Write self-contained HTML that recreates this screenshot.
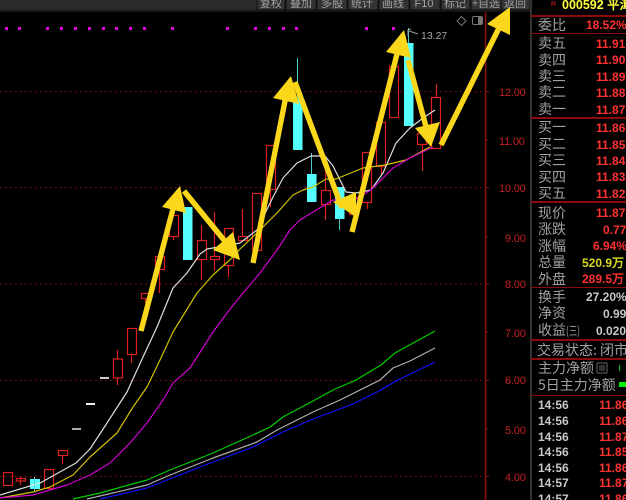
<!DOCTYPE html>
<html><head><meta charset="utf-8"><style>
html,body{margin:0;padding:0;background:#000;width:626px;height:500px;overflow:hidden}
svg{display:block}
.z{font-family:"WenQuanYi Zen Hei","Noto Sans CJK SC",sans-serif;font-size:14px;fill:#a0a0a0}
.n{font-family:"Liberation Sans","WenQuanYi Zen Hei",sans-serif;font-size:12px;font-weight:bold}
.r{fill:#ff3232}.w{fill:#c8c8c8}.y{fill:#d8d820}
.a{font-family:"Liberation Sans",sans-serif;font-size:11px;fill:#c42222;letter-spacing:-.2px}
.b{font-family:"WenQuanYi Zen Hei","Noto Sans CJK SC",sans-serif;font-size:11px;fill:#a0a0a0;text-anchor:middle}
</style></head><body>
<svg width="626" height="500" viewBox="0 0 626 500" xmlns="http://www.w3.org/2000/svg">
<rect width="626" height="500" fill="#000"/>
<!-- toolbar -->
<rect width="531" height="10" fill="#2a2a2a"/><rect y="10" width="531" height="2" fill="#161616"/>
<g fill="#333" stroke="#111"><rect x="257" y="-2" width="28" height="12"/><rect x="286" y="-2" width="30" height="12"/><rect x="317" y="-2" width="30" height="12"/><rect x="348" y="-2" width="30" height="12"/><rect x="379" y="-2" width="30" height="12"/><rect x="410" y="-2" width="30" height="12"/><rect x="441" y="-2" width="29" height="12"/><rect x="471" y="-2" width="30" height="12"/><rect x="501" y="-2" width="29" height="12"/></g>
<g class="b"><text x="271" y="7">复权</text><text x="301" y="7">叠加</text><text x="332" y="7">多股</text><text x="362" y="7">统计</text><text x="393" y="7">画线</text><text x="424" y="7" style="font-family:'Liberation Sans'">F10</text><text x="455" y="7">标记</text><text x="486" y="7">+自选</text><text x="515" y="7">返回</text></g>
<!-- magenta dots -->
<g fill="#e000e0"><rect x="5" y="27" width="3" height="3"/><rect x="18" y="27" width="3" height="3"/><rect x="46" y="27" width="3" height="3"/><rect x="60" y="27" width="3" height="3"/><rect x="74" y="27" width="3" height="3"/><rect x="88" y="27" width="3" height="3"/><rect x="102" y="27" width="3" height="3"/><rect x="115" y="27" width="3" height="3"/><rect x="129" y="27" width="3" height="3"/><rect x="143" y="27" width="3" height="3"/><rect x="171" y="27" width="3" height="3"/><rect x="226" y="27" width="3" height="3"/><rect x="254" y="27" width="3" height="3"/><rect x="268" y="27" width="3" height="3"/><rect x="282" y="27" width="3" height="3"/><rect x="295" y="27" width="3" height="3"/><rect x="365" y="27" width="3" height="3"/><rect x="392" y="27" width="3" height="3"/></g>
<!-- grid -->
<g stroke="#8a1010" stroke-width="1" stroke-dasharray="1.5 3.5"><path d="M0 91.5H485M0 187.5H485M0 284H485M0 380.5H485M0 476.5H485"/></g>
<!-- axis -->
<path d="M485.500 12V500" stroke="#8c1010" stroke-width="1.500"/>
<path d="M485 91.500h4M485 140h3M485 187.500h4M485 237h3M485 284h4M485 332h3M485 380.500h4M485 429h3M485 476.500h4" stroke="#8c1010"/>
<g class="a"><text x="499" y="96">12.00</text><text x="499" y="145">11.00</text><text x="499" y="192">10.00</text><text x="505" y="242">9.00</text><text x="505" y="288">8.00</text><text x="505" y="337">7.00</text><text x="505" y="384">6.00</text><text x="505" y="434">5.00</text><text x="505" y="481">4.00</text></g>
<!-- candles red -->
<g stroke="#dc2020" fill="none" stroke-width="1.200">
<rect x="3.500" y="472.500" width="9" height="13"/>
<path d="M20.500 476V485"/><rect x="16.500" y="478.500" width="9" height="2.500"/>
<rect x="44.500" y="469.500" width="9" height="19"/>
<rect x="58.500" y="450.500" width="9" height="5"/><path d="M62.500 455V464"/>
<rect x="113.500" y="359" width="9" height="19"/><path d="M117.500 350V359M117.500 378V385"/>
<rect x="127.500" y="328.500" width="9" height="26"/><path d="M131.500 354V363"/>
<rect x="141.500" y="293.500" width="9" height="5"/><path d="M145.500 298V303"/>
<rect x="155.500" y="256.500" width="9" height="13"/><path d="M159.500 269V293"/>
<rect x="169.500" y="215.500" width="9" height="21"/><path d="M173.500 236V240"/>
<rect x="197.500" y="240.500" width="9" height="19"/><path d="M201.500 225V240M201.500 259V280"/>
<rect x="210.500" y="256.500" width="9" height="3"/><path d="M214.500 212V256M214.500 259V271"/>
<rect x="224.500" y="228.500" width="9" height="37"/><path d="M228.500 265V277"/>
<rect x="238.500" y="236.500" width="9" height="4"/><path d="M242.500 209V236"/>
<rect x="252.500" y="193.500" width="9" height="57"/>
<rect x="266.500" y="145.500" width="9" height="44"/><path d="M270.500 189V207"/>
<rect x="321.500" y="190.500" width="9" height="14"/><path d="M325.500 168V190M325.500 204V220"/>
<rect x="349.500" y="197.500" width="9" height="17"/>
<rect x="362.500" y="152.500" width="9" height="50"/><path d="M367.500 202V209"/>
<rect x="376.500" y="122.500" width="9" height="44"/><path d="M381.500 166V175"/>
<rect x="389.500" y="66.500" width="9" height="51"/>
<rect x="417.500" y="133.500" width="9" height="11"/><path d="M422.500 144V171"/>
<rect x="431.500" y="97.500" width="9" height="51"/><path d="M436.500 84V97"/>
</g>
<!-- dashes -->
<rect x="72" y="428" width="9" height="2" fill="#aaa"/><rect x="86" y="403" width="9" height="2" fill="#eee"/><rect x="100" y="377" width="9" height="2" fill="#ccc"/>
<!-- candles cyan -->
<g fill="#55ffff">
<rect x="30" y="479" width="10" height="10"/><rect x="183" y="207" width="9.500" height="53"/><rect x="293" y="98" width="9.500" height="52"/><rect x="307" y="174" width="9.500" height="28"/><rect x="335" y="187" width="9.500" height="32"/><rect x="404" y="43" width="9.500" height="83"/>
</g>
<path d="M34.500 477V491M297.500 58V100M311.500 153V174M339.500 218V230M408.500 28V43" stroke="#44cccc" fill="none"/>
<!-- MA lines -->
<g fill="none" stroke-width="1.200" stroke-linejoin="round">
<path stroke="#e0e0e0" d="M0 495L40 483L76 463L90 449L107 423L127 392L143 357L157 327L173 288L187 273L200 254L207 249L225 246L240 243L257 230L273 197L283 178L297 163L311 156L325 156L333 166L346 192L356 193L371 190L383 173L396 143L410 128L423 118L435 110"/>
<path stroke="#d0c000" d="M0 498L33 492L50 487L73 475L90 457L117 433L133 407L147 387L160 360L173 332L197 293L213 275L233 257L240 249L260 230L277 213L293 195L303 190L313 187L326 179L336 179L363 168L385 165L406 160L430 147"/>
<path stroke="#d000d0" d="M0 498L33 495L67 485L90 475L110 463L130 443L147 423L163 400L173 383L190 368L213 332L227 313L243 293L260 273L277 250L290 230L300 220L313 212L333 200L356 199L371 190L393 168L410 158L433 147"/>
<path stroke="#00d000" d="M73 499L100 493L147 480L170 470L213 453L253 435L270 427L283 417L313 401L333 390L356 380L381 365L395 353L435 331"/>
<path stroke="#b0b0b0" d="M87 499L147 485L170 475L213 458L257 442L277 430L313 412L340 400L380 380L393 368L410 361L435 348"/>
<path stroke="#1010ff" d="M100 499L147 488L200 467L253 447L283 432L313 419L353 404L381 390L396 381L435 362"/>
</g>
<!-- top marker -->
<path d="M408 36V30L411 29M409 31L418 34" stroke="#999" fill="none"/>
<text x="421" y="39" font-family="Liberation Sans,sans-serif" font-size="10.500" fill="#a8a8a8">13.27</text>
<path d="M461.500 16.500L466 21L461.500 25.500L457 21Z" fill="none" stroke="#777"/>
<rect x="472.500" y="16.500" width="10" height="8" rx="1.500" fill="none" stroke="#777"/><rect x="478" y="17" width="4" height="7" fill="#777"/>
<!-- arrows -->
<g stroke="#fbd71b" stroke-width="5.400" fill="none">
<path d="M141 331L174 205M184 191L228 245M253 263L286 96M295 82L342 208M352 232L398 50M408 60L428 134M441 145L499 28"/>
</g>
<g fill="#fbd71b">
<path d="M180 186L162 207L186 213Z"/>
<path d="M233 232L213 250L240 260Z"/>
<path d="M291 76L273 98L299 104Z"/>
<path d="M333 202L356 217L356 192Z"/>
<path d="M404 30L386 52L411 58Z"/>
<path d="M415 128L440 122L431 147Z"/>
<path d="M510 7L487 24L510 35Z"/>
</g>
<!-- panel -->
<rect x="530" y="0" width="2" height="500" fill="#333"/>
<g fill="#8c0a0a"><rect x="531" y="15" width="95" height="2"/><rect x="531" y="33" width="95" height="1"/><rect x="531" y="117" width="95" height="2"/><rect x="531" y="201" width="95" height="2"/><rect x="531" y="287" width="95" height="1"/><rect x="531" y="339" width="95" height="2"/><rect x="531" y="358" width="95" height="2"/><rect x="531" y="395" width="95" height="1"/></g>
<text x="551" y="6" font-family="Liberation Sans,sans-serif" font-size="7" fill="#e02020">R</text>
<text x="562" y="9" font-family="Liberation Sans,'WenQuanYi Zen Hei',sans-serif" font-size="12.500" font-weight="bold" fill="#ffff40">000592 平潭</text>
<g class="z">
<text x="538" y="30">委比</text>
<text x="538" y="48">卖五</text><text x="538" y="65">卖四</text><text x="538" y="81">卖三</text><text x="538" y="97">卖二</text><text x="538" y="114">卖一</text>
<text x="538" y="132">买一</text><text x="538" y="149">买二</text><text x="538" y="165">买三</text><text x="538" y="182">买四</text><text x="538" y="198">买五</text>
<text x="538" y="218">现价</text><text x="538" y="234">涨跌</text><text x="538" y="251">涨幅</text><text x="538" y="267">总量</text><text x="538" y="284">外盘</text>
<text x="538" y="302">换手</text><text x="538" y="318">净资</text><text x="538" y="335">收益</text><text x="566" y="335" font-size="12" textLength="14" lengthAdjust="spacingAndGlyphs">(三)</text>
<text x="537" y="355">交易状态: 闭市</text>
<text x="538" y="373">主力净额</text><text x="538" y="390">5日主力净额</text>
</g>
<rect x="597" y="363" width="10" height="10" rx="1" fill="none" stroke="#666"/><path d="M599 366h6M599 368h6M599 370h6" stroke="#666"/>
<rect x="619" y="365" width="1" height="6" fill="#00d000"/><rect x="619" y="382" width="7" height="5" fill="#00ee00"/>
<g class="n r">
<text x="586" y="29">18.52%</text>
<text x="596" y="48">11.91</text><text x="596" y="64">11.90</text><text x="596" y="81">11.89</text><text x="596" y="97">11.88</text><text x="596" y="114">11.87</text>
<text x="596" y="132">11.86</text><text x="596" y="149">11.85</text><text x="596" y="165">11.84</text><text x="596" y="181">11.83</text><text x="596" y="198">11.82</text>
<text x="596" y="217">11.87</text><text x="603" y="234">0.77</text><text x="593" y="250">6.94%</text>
<text x="582" y="283">289.5万</text>
<text x="599" y="409">11.86</text><text x="599" y="425">11.86</text><text x="599" y="441">11.87</text><text x="599" y="456">11.85</text><text x="599" y="472">11.86</text><text x="599" y="487">11.87</text><text x="599" y="503">11.86</text>
</g>
<text class="n y" x="582" y="267">520.9万</text>
<g class="n w">
<text x="586" y="301">27.20%</text><text x="603" y="318">0.99</text><text x="596" y="335">0.020</text>
<text x="538" y="409">14:56</text><text x="538" y="425">14:56</text><text x="538" y="441">14:56</text><text x="538" y="456">14:56</text><text x="538" y="472">14:56</text><text x="538" y="487">14:57</text><text x="538" y="503">14:57</text>
</g>
</svg>
</body></html>
